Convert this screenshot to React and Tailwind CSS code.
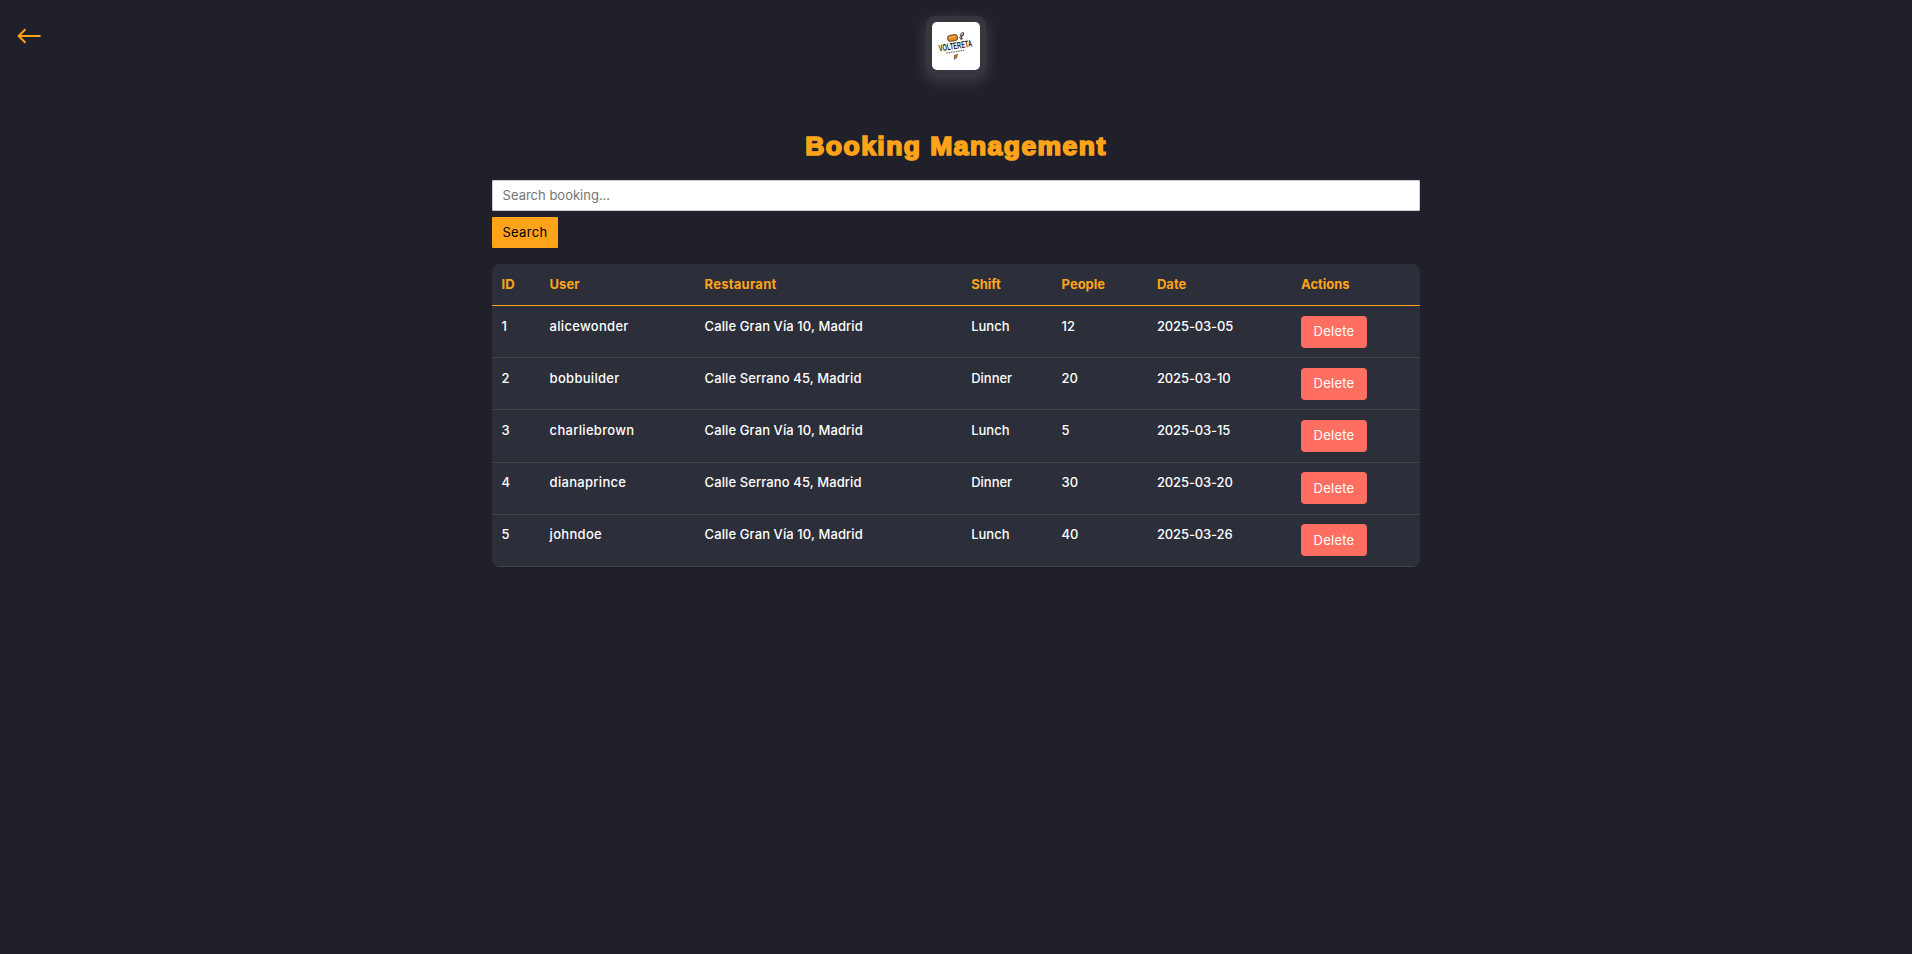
const bookings = [
  { id: 1, user: 'alicewonder', place: 'Calle Gran Vía 10, Madrid', shift: 'Lunch', people: 12, date: '2025-03-05' },
  { id: 2, user: 'bobbuilder', place: 'Calle Serrano 45, Madrid', shift: 'Dinner', people: 20, date: '2025-03-10' },
  { id: 3, user: 'charliebrown', place: 'Calle Gran Vía 10, Madrid', shift: 'Lunch', people: 5, date: '2025-03-15' },
  { id: 4, user: 'dianaprince', place: 'Calle Serrano 45, Madrid', shift: 'Dinner', people: 30, date: '2025-03-20' },
  { id: 5, user: 'johndoe', place: 'Calle Gran Vía 10, Madrid', shift: 'Lunch', people: 40, date: '2025-03-26' },
];

const columns = 'grid grid-cols-[48px_155px_266.6px_90.4px_95.4px_144px_1fr] *:pl-[9.6px]';

function BackArrow() {
  return (
    <svg width="24" height="18" viewBox="0 0 24 18" fill="none" stroke="#ffa31a" strokeWidth="2" strokeLinecap="butt" strokeLinejoin="round">
      <path d="M23.6 9H1.8M8.5 2.2L1.6 9L8.5 15.8" />
    </svg>
  );
}

function Logo() {
  return (
    <div className="rounded-[10px] bg-[#36363f] p-[6px] shadow-[0_4px_15px_rgba(255,255,255,0.16)]">
      <div className="size-12 rounded-[5px] bg-white">
        <svg className="overflow-visible" width="48" height="48" viewBox="0 0 48 48">
          <g transform="rotate(-10 20.5 16)">
            <rect x="15.6" y="13" width="10" height="6" rx="2.6" fill="#e08a2c" stroke="#4a2410" strokeWidth="0.8" />
            <path d="M17.5 14.8H23" stroke="#f8b552" strokeWidth="1.3" />
          </g>
          <path d="M28.4 12.5Q29.5 9.8 31.8 10.8M31.8 10.8Q32 14.5 29 14.8L28.4 12.5M30.2 12L28.8 18M27.2 15.5L31 17" stroke="#33231f" strokeWidth="0.9" fill="none" />
          <g transform="rotate(-9 7 29.5)" fill="#2b1c1a">
            <text x="7.3" y="29.6" fontFamily="Liberation Sans" fontWeight="bold" fontSize="9.5" textLength="33.6" lengthAdjust="spacingAndGlyphs">VOLTERETA</text>
            <path d="M14 32.2H32" stroke="#66564f" strokeWidth="1" strokeDasharray="1.6 0.8" />
          </g>
          <path d="M22.5 33.2L25.5 32.3L24.6 36L22.2 37.3Z" fill="#cf7625" stroke="#6a3613" strokeWidth="0.6" />
        </svg>
      </div>
    </div>
  );
}

export default function App() {
  return (
    <div className="relative flex min-h-screen flex-col items-center bg-[#20202a] font-[Inter,sans-serif] text-[13px] text-white">
      <button className="absolute left-[17px] top-[27px]" aria-label="Back"><BackArrow /></button>
      <header className="pt-4"><Logo /></header>
      <main className="flex w-[928px] flex-col pt-[50px]">
        <h1 className="h-[40px] text-center font-['Liberation_Sans',sans-serif] text-[26.5px] font-bold leading-[40px] tracking-[1.45px] text-[#ffa31a] [-webkit-text-stroke:1.7px_#ffa31a]">Booking Management</h1>
        <form className="mt-[14px] flex flex-col items-start gap-[6px]">
          <input className="h-[31px] w-full rounded-[1px] border border-[#cfcfd6] bg-white px-[9.6px] pb-[2px] text-black outline-none placeholder:text-[#757575]" placeholder="Search booking..." />
          <button type="button" className="h-[31px] w-[66px] rounded-[1px] bg-[#ffa31a] tracking-[0.35px] text-black">Search</button>
        </form>
        <section className="mt-4 overflow-hidden rounded-lg bg-[#2c2e39]">
          <div className={`${columns} h-[42px] items-center border-b border-[#ffa31a] font-bold text-[#ffa31a]`}>
            <span>ID</span><span>User</span><span className="tracking-[0.25px]">Restaurant</span><span>Shift</span><span>People</span><span>Date</span><span>Actions</span>
          </div>
          {bookings.map((b) => (
            <div key={b.id} className={`${columns} h-[52.2px] items-start border-b border-[#444444] pt-[9.6px] font-medium leading-[20px]`}>
              <span>{b.id}</span>
              <span className="tracking-[0.3px]">{b.user}</span>
              <span className="tracking-[0.1px]">{b.place}</span>
              <span>{b.shift}</span>
              <span>{b.people}</span>
              <span className="tracking-[-0.13px]">{b.date}</span>
              <div><button className="block h-8 w-[66px] rounded bg-[#ff6f61] pb-px font-normal tracking-[0.25px]">Delete</button></div>
            </div>
          ))}
        </section>
      </main>
    </div>
  );
}
